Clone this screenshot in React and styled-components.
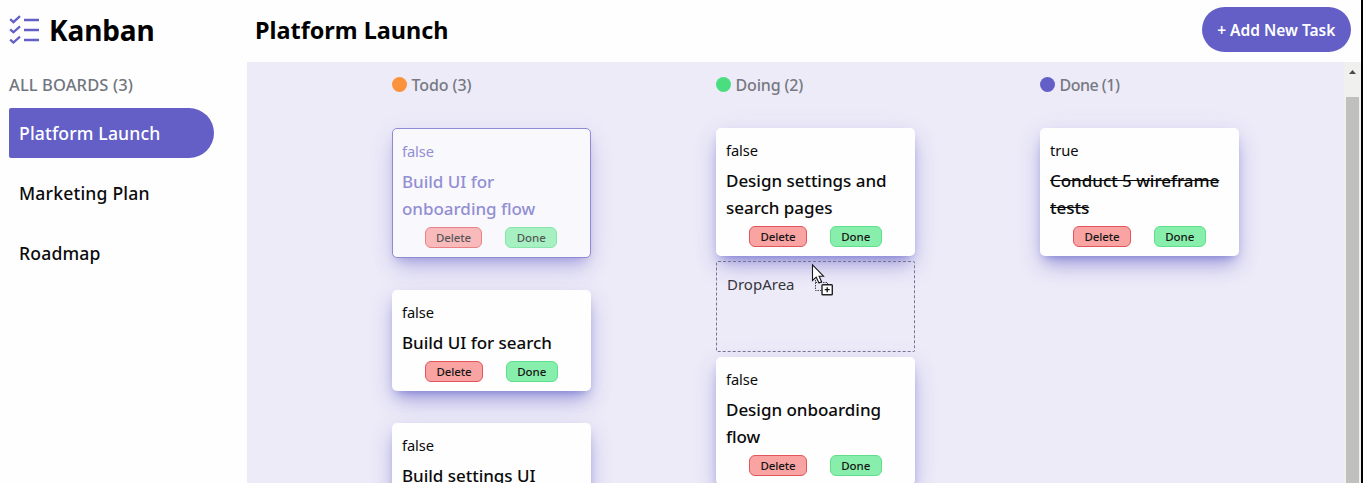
import React from 'react';
import styled, { createGlobalStyle } from 'styled-components';

const Global = createGlobalStyle`
  *, *::before, *::after { box-sizing: border-box; }
  body { margin: 0; overflow: hidden; }
  h1, h2, h3, p { margin: 0; }
  button { margin: 0; font-family: inherit; }
`;

const Page = styled.div`
  display: flex;
  width: 1363px;
  height: 483px;
  overflow: hidden;
  border-right: 2px solid #000;
  background: #fefefe;
  color: #0b0b0c;
  font-family: "Noto Sans", "Open Sans", sans-serif;
  font-weight: 500;
`;

const Sidebar = styled.aside`
  flex: none;
  width: 246.5px;
  padding-left: 9px;
`;

const Brand = styled.div`
  display: flex;
  align-items: center;
  gap: 8px;
  height: 62px;
`;

const BrandIcon = styled.svg`
  display: block;
  width: 32px;
  height: 30px;
  margin-top: -4px;
  fill: none;
  stroke: #635fc7;
  stroke-width: 2.3;
`;

const BrandName = styled.h1`
  margin-top: -2px;
  font-size: 28px;
  font-weight: 700;
  line-height: 40px;
  letter-spacing: -0.1px;
  color: #000;
`;

const BoardCount = styled.p`
  height: 46px;
  line-height: 46px;
  font-size: 16.5px;
  letter-spacing: 0.1px;
  color: #71757f;
`;

const BoardList = styled.nav`
  display: flex;
  flex-direction: column;
  gap: 10px;
`;

const BoardLink = styled.a`
  width: 205px;
  height: 50px;
  padding-left: 10px;
  border-radius: 2px 25px 25px 2px;
  background: ${(p) => (p.$active ? '#635fc7' : 'transparent')};
  color: ${(p) => (p.$active ? '#fff' : 'inherit')};
  font-size: 17.6px;
  line-height: 50px;
  letter-spacing: ${(p) => p.$tracking || 0}px;
`;

const Main = styled.main`
  display: flex;
  flex: 1;
  flex-direction: column;
  min-width: 0;
`;

const Header = styled.header`
  display: flex;
  align-items: center;
  justify-content: space-between;
  flex: none;
  height: 62px;
  padding: 0 10px 3px 8.5px;
`;

const BoardTitle = styled.h2`
  font-size: 23.4px;
  font-weight: 700;
  line-height: 32px;
  color: #000;
  padding-top: 1px;
`;

const AddButton = styled.button`
  width: 149.5px;
  height: 45px;
  padding: 0;
  border: 0;
  border-radius: 23px;
  background: #635fc7;
  color: #fff;
  font-size: 15.5px;
  font-weight: 600;
`;

const Board = styled.section`
  display: flex;
  flex: 1;
  min-height: 0;
  background: #edebf8;
`;

const Columns = styled.div`
  display: flex;
  flex: 1;
  gap: 125px;
  padding-left: 145.5px;
  overflow: hidden;
`;

const Column = styled.div`
  flex: none;
  width: 199px;
`;

const ColumnHeader = styled.div`
  display: flex;
  align-items: center;
  gap: 4.5px;
  height: 45px;
  margin-bottom: 21px;
  color: #767981;
  font-size: 16px;
  white-space: nowrap;
  letter-spacing: ${(p) => p.$tracking}px;
`;

const Dot = styled.span`
  width: 15px;
  height: 15px;
  border-radius: 50%;
  background: ${(p) => p.$color};
`;

const CardStack = styled.div`
  display: flex;
  flex-direction: column;
  gap: ${(p) => p.$gap}px;
`;

const Card = styled.article`
  padding: 10px;
  border-radius: 5px;
  background: #fefefe;
  box-shadow: 0 12px 20px -4px rgba(99, 95, 199, 0.5), 0 5px 9px -5px rgba(99, 95, 199, 0.7),
    0 5px 28px rgba(99, 95, 199, 0.09);
  ${(p) =>
    p.$dragging &&
    `
    padding-left: 9px;
    border: 1px solid #8f8bd2;
    background: #f9f8fd;
    color: #928fd3;
    box-shadow: 0 12px 20px -4px rgba(99, 95, 199, 0.36), 0 5px 9px -5px rgba(99, 95, 199, 0.4),
      0 5px 28px rgba(99, 95, 199, 0.08);
  `}
`;

const CardState = styled.p`
  margin-bottom: 5px;
  font-size: 14.7px;
  font-weight: 400;
  line-height: 24px;
  letter-spacing: -0.1px;
`;

const CardTitle = styled.h3`
  font-size: 17px;
  font-weight: 500;
  line-height: 27px;
  letter-spacing: -0.03px;
  text-decoration: ${(p) => (p.$done ? 'line-through' : 'none')};
  white-space: pre-line;
`;

const Actions = styled.div`
  display: flex;
  justify-content: center;
  gap: 23px;
  margin-top: 5px;
  opacity: ${(p) => (p.$faded ? 0.72 : 1)};
`;

const ActionButton = styled.button`
  width: ${(p) => (p.$kind === 'delete' ? 57.5 : 52)}px;
  height: 20.5px;
  margin-bottom: -0.5px;
  padding: 0;
  border: 1px solid ${(p) => (p.$kind === 'delete' ? '#e2555a' : '#5fdf8c')};
  border-radius: 6px;
  background: ${(p) => (p.$kind === 'delete' ? '#f9a3a3' : '#88eeab')};
  color: #161616;
  font-size: 11.5px;
  font-weight: 500;
  line-height: 19px;
  letter-spacing: -0.1px;
`;

const DropZone = styled.div`
  position: relative;
  height: 91px;
  padding: 10px;
  border: 1px dashed #77748f;
  border-radius: 2px;
  font-size: 15px;
  font-weight: 400;
  line-height: 25px;
  color: #35353d;
`;

const Cursor = styled.svg`
  position: absolute;
  left: 94px;
  top: 1px;
  width: 26px;
  height: 34px;
`;

const Scrollbar = styled.div`
  flex: none;
  display: flex;
  flex-direction: column;
  align-items: center;
  width: 17px;
  background: #f0f0ef;
`;

const ScrollArrow = styled.svg`
  flex: none;
  width: 17px;
  height: 35px;
  fill: #4b4b4b;
`;

const ScrollThumb = styled.div`
  flex: 1;
  width: 13px;
  background: #c0c0be;
`;

const boards = [
  { name: 'Platform Launch', active: true, tracking: 0.15 },
  { name: 'Marketing Plan', tracking: 0.18 },
  { name: 'Roadmap', tracking: 0.15 },
];

function Task({ title, done, dragging }) {
  return (
    <Card $dragging={dragging}>
      <CardState>{String(!!done)}</CardState>
      <CardTitle $done={done}>{title}</CardTitle>
      <Actions $faded={dragging}>
        <ActionButton $kind="delete">Delete</ActionButton>
        <ActionButton $kind="done">Done</ActionButton>
      </Actions>
    </Card>
  );
}

function DragCursor() {
  return (
    <Cursor viewBox="0 0 26 34">
      <path d="M4.5 17V27.5H12M4.5 19.5H16.5V22" fill="none" stroke="#444" strokeDasharray="1.5 1" />
      <path d="M1.5 1.8V17.5L5.2 14.2L8 20L10.6 18.8L8.1 13.2H12.5Z" fill="#fff" stroke="#161616" strokeWidth="1.1" />
      <rect x="11" y="21.7" width="10.3" height="10" rx="0.8" fill="#fff" stroke="#222" strokeWidth="1.4" />
      <path d="M16.2 24.2V29.2M13.7 26.7H18.7" stroke="#111" strokeWidth="1.3" />
    </Cursor>
  );
}

export default function App() {
  return (
    <Page>
      <Global />
      <Sidebar>
        <Brand>
          <BrandIcon viewBox="0 0 32 30">
            <path d="M1.2 5.2L4.4 8.1L11 2.2M1.2 15.4L4.4 18.3L11 12.4M1.2 25.6L4.4 28.5L11 22.6" />
            <path d="M15 6H30M15 16H30M15 26H30" />
          </BrandIcon>
          <BrandName>Kanban</BrandName>
        </Brand>
        <BoardCount>ALL BOARDS (3)</BoardCount>
        <BoardList>
          {boards.map((b) => (
            <BoardLink key={b.name} $active={b.active} $tracking={b.tracking}>
              {b.name}
            </BoardLink>
          ))}
        </BoardList>
      </Sidebar>
      <Main>
        <Header>
          <BoardTitle>Platform Launch</BoardTitle>
          <AddButton>+ Add New Task</AddButton>
        </Header>
        <Board>
          <Columns>
            <Column>
              <ColumnHeader $tracking={-0.1}>
                <Dot $color="#fb923c" />
                Todo (3)
              </ColumnHeader>
              <CardStack $gap={32}>
                <Task title={'Build UI for\nonboarding flow'} dragging />
                <Task title="Build UI for search" />
                <Task title="Build settings UI" />
              </CardStack>
            </Column>
            <Column>
              <ColumnHeader $tracking={-0.15}>
                <Dot $color="#4ade80" />
                Doing (2)
              </ColumnHeader>
              <CardStack $gap={5}>
                <Task title={'Design settings and\nsearch pages'} />
                <DropZone>
                  DropArea
                  <DragCursor />
                </DropZone>
                <Task title={'Design onboarding\nflow'} />
              </CardStack>
            </Column>
            <Column>
              <ColumnHeader $tracking={-0.5}>
                <Dot $color="#635fc7" />
                Done (1)
              </ColumnHeader>
              <CardStack $gap={32}>
                <Task title={'Conduct 5 wireframe\ntests'} done />
              </CardStack>
            </Column>
          </Columns>
          <Scrollbar>
            <ScrollArrow viewBox="0 0 17 35">
              <path d="M5 12H12L8.5 8Z" />
            </ScrollArrow>
            <ScrollThumb />
          </Scrollbar>
        </Board>
      </Main>
    </Page>
  );
}
